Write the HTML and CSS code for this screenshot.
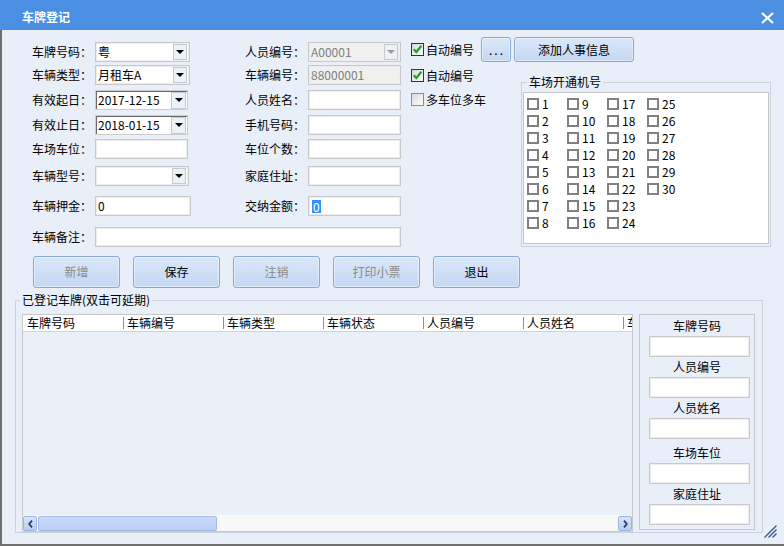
FILE: index.html
```html
<!DOCTYPE html>
<html lang="zh-CN">
<head>
<meta charset="utf-8">
<title>车牌登记</title>
<link rel="stylesheet" href="styles.css">
</head>
<body>
<div class="window">
  <div class="titlebar">
    <span class="title">车牌登记</span>
    <svg class="close" width="13" height="12" viewBox="0 0 13 12"><path d="M1 1L12 11M12 1L1 11" stroke="#fff" stroke-width="2.2" fill="none"/></svg>
  </div>
  <div class="client">
    <div class="top">
      <div class="form">
        <span class="lbl">车牌号码：</span>
        <div class="field combo w95"><span class="val">粤</span><span class="arrow"></span></div>
        <span class="lbl">人员编号：</span>
        <div class="field combo off w93"><span class="val">A00001</span><span class="arrow"></span></div>

        <span class="lbl">车辆类型：</span>
        <div class="field combo w95"><span class="val">月租车A</span><span class="arrow"></span></div>
        <span class="lbl">车辆编号：</span>
        <div class="field off w93"><span class="val">88000001</span></div>

        <span class="lbl">有效起日：</span>
        <div class="field date w93"><span class="val">2017-12-15</span><span class="arrow"></span></div>
        <span class="lbl">人员姓名：</span>
        <div class="field w93"></div>

        <span class="lbl">有效止日：</span>
        <div class="field date w93"><span class="val">2018-01-15</span><span class="arrow"></span></div>
        <span class="lbl">手机号码：</span>
        <div class="field w93"></div>

        <span class="lbl">车场车位：</span>
        <div class="field w93"></div>
        <span class="lbl">车位个数：</span>
        <div class="field w93"></div>

        <span class="lbl">车辆型号：</span>
        <div class="field combo w94"><span class="val"></span><span class="arrow"></span></div>
        <span class="lbl">家庭住址：</span>
        <div class="field w93"></div>

        <span class="lbl">车辆押金：</span>
        <div class="field w96"><span class="val">0</span></div>
        <span class="lbl">交纳金额：</span>
        <div class="field w93"><span class="val sel">0</span></div>

        <span class="lbl">车辆备注：</span>
        <div class="field wide"></div>
      </div>

      <div class="side">
        <div class="side-row">
          <label class="chk"><span class="box on"><svg width="11" height="11" viewBox="0 0 11 11"><path d="M1.8 5.2L4.3 8L9.4 1.8" stroke="#23a023" stroke-width="2.2" fill="none"/></svg></span>自动编号</label>
          <button class="btn dots">...</button>
          <button class="btn add">添加人事信息</button>
        </div>
        <div class="side-main">
          <div class="chk-col">
            <label class="chk"><span class="box on"><svg width="11" height="11" viewBox="0 0 11 11"><path d="M1.8 5.2L4.3 8L9.4 1.8" stroke="#23a023" stroke-width="2.2" fill="none"/></svg></span>自动编号</label>
            <label class="chk"><span class="box plain"></span>多车位多车</label>
          </div>
          <fieldset class="group ports">
            <legend>车场开通机号</legend>
            <div class="port-list">
              <div class="port"><span class="pbox"></span>1</div>
              <div class="port"><span class="pbox"></span>2</div>
              <div class="port"><span class="pbox"></span>3</div>
              <div class="port"><span class="pbox"></span>4</div>
              <div class="port"><span class="pbox"></span>5</div>
              <div class="port"><span class="pbox"></span>6</div>
              <div class="port"><span class="pbox"></span>7</div>
              <div class="port"><span class="pbox"></span>8</div>
              <div class="port"><span class="pbox"></span>9</div>
              <div class="port"><span class="pbox"></span>10</div>
              <div class="port"><span class="pbox"></span>11</div>
              <div class="port"><span class="pbox"></span>12</div>
              <div class="port"><span class="pbox"></span>13</div>
              <div class="port"><span class="pbox"></span>14</div>
              <div class="port"><span class="pbox"></span>15</div>
              <div class="port"><span class="pbox"></span>16</div>
              <div class="port"><span class="pbox"></span>17</div>
              <div class="port"><span class="pbox"></span>18</div>
              <div class="port"><span class="pbox"></span>19</div>
              <div class="port"><span class="pbox"></span>20</div>
              <div class="port"><span class="pbox"></span>21</div>
              <div class="port"><span class="pbox"></span>22</div>
              <div class="port"><span class="pbox"></span>23</div>
              <div class="port"><span class="pbox"></span>24</div>
              <div class="port"><span class="pbox"></span>25</div>
              <div class="port"><span class="pbox"></span>26</div>
              <div class="port"><span class="pbox"></span>27</div>
              <div class="port"><span class="pbox"></span>28</div>
              <div class="port"><span class="pbox"></span>29</div>
              <div class="port"><span class="pbox"></span>30</div>
            </div>
          </fieldset>
        </div>
      </div>
    </div>

    <div class="actions">
      <button class="btn act off">新增</button>
      <button class="btn act">保存</button>
      <button class="btn act off">注销</button>
      <button class="btn act off">打印小票</button>
      <button class="btn act">退出</button>
    </div>

    <fieldset class="group records">
      <legend>已登记车牌(双击可延期)</legend>
      <div class="rec-body">
        <div class="grid">
          <div class="grid-head">
            <span class="hc">车牌号码</span>
            <span class="hc sep">车辆编号</span>
            <span class="hc sep">车辆类型</span>
            <span class="hc sep">车辆状态</span>
            <span class="hc sep">人员编号</span>
            <span class="hc sep">人员姓名</span>
            <span class="hc sep">车场车位</span>
          </div>
          <div class="grid-body"></div>
          <div class="hscroll">
            <span class="sbtn"><svg width="5" height="8" viewBox="0 0 5 8"><path d="M4 0.6L1.2 4L4 7.4" stroke="#2d3d63" stroke-width="1.8" fill="none"/></svg></span>
            <span class="thumb"></span>
            <span class="track"></span>
            <span class="sbtn"><svg width="5" height="8" viewBox="0 0 5 8"><path d="M1 0.6L3.8 4L1 7.4" stroke="#2d3d63" stroke-width="1.8" fill="none"/></svg></span>
          </div>
        </div>
        <div class="panel">
          <div class="plabel">车牌号码</div>
          <div class="field pfield"></div>
          <div class="plabel">人员编号</div>
          <div class="field pfield"></div>
          <div class="plabel">人员姓名</div>
          <div class="field pfield"></div>
          <div class="plabel pgap">车场车位</div>
          <div class="field pfield"></div>
          <div class="plabel">家庭住址</div>
          <div class="field pfield"></div>
        </div>
      </div>
    </fieldset>
  </div>
  <svg class="grip" width="14" height="14" viewBox="0 0 14 14"><path d="M13.5 1.5L1.5 13.5M13.5 5.5L5.5 13.5M13.5 9.5L9.5 13.5" stroke="#3d5886" stroke-width="1.4" fill="none"/></svg>
</div>
</body>
</html>
```

FILE: styles.css
```css
* { box-sizing: border-box; }
html, body { margin: 0; padding: 0; }
body {
  width: 784px;
  height: 546px;
  overflow: hidden;
  font-family: "Noto Sans CJK SC", "Liberation Sans", sans-serif;
  font-size: 12px;
  color: #000;
  background: #e9eff8;
}
.window {
  width: 784px;
  height: 546px;
  display: flex;
  flex-direction: column;
  position: relative;
}
.titlebar {
  height: 30px;
  flex: none;
  background: #4a8fe1;
  display: flex;
  align-items: center;
  justify-content: space-between;
  padding: 0 10px 0 22px;
  color: #fff;
}
.title { font-weight: bold; line-height: 14px; margin-top: 4px; }
.close { margin-top: 6px; }

.client {
  flex: 1;
  border-left: 2px solid #6f6f6f;
  border-bottom: 2px solid #6f6f6f;
  background: #e9eff8;
  display: flex;
  flex-direction: column;
}

/* top area */
.top {
  display: flex;
  align-items: flex-start;
  padding-left: 30px;
  height: 221px;
  flex: none;
}
.form {
  margin-top: 10px;
  display: grid;
  grid-template-columns: 63px 150px 63px 92px;
  grid-template-rows: 24px 22px 28px 22px 26px 27px 34px 28px;
  align-items: center;
}
.lbl { line-height: 16px; white-space: nowrap; }

.field {
  height: 20px;
  background: #fff;
  border: 1px solid #c9c9c9;
  box-shadow: inset 0 0 0 1px #ededed;
  display: flex;
  align-items: center;
  padding-left: 2px;
  line-height: 16px;
  white-space: nowrap;
}
.w93 { width: 93px; }
.w94 { width: 94px; }
.w95 { width: 95px; }
.w96 { width: 96px; }
.wide { grid-column: 2 / 5; width: 306px; }
.field.off { background: #f0f0f0; color: #7f7f7f; }
.field.date { box-shadow: inset 1px 1px 0 #6a6a6a; border-color: #cdcdcd; }
.val.sel { background: #3392ff; color: #fff; line-height: 13px; padding: 0 1px; margin-left: 1px; }

.arrow {
  margin-left: auto;
  margin-right: 2px;
  width: 14px;
  height: 16px;
  background: #edf2f9;
  border: 1px solid #c4cad3;
  display: flex;
  align-items: center;
  justify-content: center;
}
.arrow::before {
  content: "";
  border-left: 4px solid transparent;
  border-right: 4px solid transparent;
  border-top: 4px solid #000;
}
.field.off .arrow::before { border-top-color: #9a9a9a; }
.field.date .arrow { height: 17px; width: 15px; margin-right: 1px; }

/* side area */
.side { margin-left: 11px; margin-top: 7px; width: 360px; }
.side-row { display: flex; align-items: center; height: 25px; }
.chk { display: flex; align-items: center; height: 13px; line-height: 13px; white-space: nowrap; }
.side-row .chk { width: 70px; }
.box {
  width: 13px;
  height: 13px;
  flex: none;
  margin-right: 2px;
  border: 1px solid #1c365f;
  background: linear-gradient(135deg, #d8d8d8, #ffffff);
  display: flex;
  align-items: center;
  justify-content: center;
}
.box.plain { border-color: #8c8c8c; }

.btn {
  font-family: inherit;
  font-size: 12px;
  color: #000;
  border: 1px solid #88a7d5;
  border-radius: 3px;
  background: linear-gradient(#dae7f9, #c3d8f3);
  box-shadow: inset 0 0 0 1px rgba(255, 255, 255, 0.45);
  padding: 0;
  line-height: 16px;
}
.dots { width: 30px; height: 25px; margin-right: 3px; letter-spacing: 2px; padding-left: 2px; }
.add { width: 120px; height: 25px; }

.side-main { display: flex; align-items: flex-start; }
.chk-col { width: 110px; padding-top: 7px; display: flex; flex-direction: column; gap: 11px; }

.group {
  margin: 0;
  border: 1px solid #cdd2da;
  min-width: 0;
}
.group legend { line-height: 16px; height: 16px; }

.ports { margin-top: 12px; width: 250px; padding: 2px 1px; }
.ports legend { margin-left: 4px; padding: 0 2px; }
.port-list {
  background: #fff;
  border: 1px solid #c6c6c6;
  height: 152px;
  padding: 4px 0 0 3px;
  display: grid;
  grid-template-rows: repeat(8, 17px);
  grid-auto-flow: column;
  grid-auto-columns: 40px;
}
.port { display: flex; align-items: center; height: 13px; line-height: 13px; }
.pbox { width: 12px; height: 12px; border: 2px solid #808080; background: #fff; margin-right: 3px; flex: none; }

/* action buttons */
.actions { display: flex; gap: 13px; margin: 5px 0 0 31px; flex: none; }
.act { width: 87px; height: 32px; }
.act.off { color: #8a8a8a; }

/* records */
.records { margin-top: 4px; margin-left: 13px; width: 748px; padding: 6px 7px 0 6px; flex: none; }
.records legend { margin-left: -2px; padding: 0 2px; }
.rec-body { display: flex; gap: 6px; align-items: flex-start; }
.grid {
  width: 611px;
  height: 218px;
  border: 1px solid #c9c9c9;
  background: #eaf0f8;
  display: flex;
  flex-direction: column;
}
.grid-head {
  height: 17px;
  flex: none;
  background: #fff;
  border-bottom: 1px solid #d2d2d2;
  display: flex;
  overflow: hidden;
}
.hc { width: 100px; flex: none; padding-left: 4px; line-height: 16px; white-space: nowrap; }
.hc.sep { background: linear-gradient(#8f8f8f, #8f8f8f) no-repeat 0 2px / 1px 12px; }
.grid-body { flex: 1; }
.hscroll { height: 16px; flex: none; display: flex; background: #f8f8f8; }
.sbtn {
  width: 14px;
  height: 15px;
  margin-top: 1px;
  background: linear-gradient(#d8e4fb, #b7cdf4);
  border: 1px solid #9db5e6;
  border-radius: 2px;
  display: flex;
  align-items: center;
  justify-content: center;
  flex: none;
}
.thumb {
  width: 179px;
  height: 15px;
  margin: 1px 0 0 1px;
  background: linear-gradient(#c9daf9, #bcd0f6);
  border: 1px solid #a3bbe9;
  border-radius: 2px;
  flex: none;
}
.track { flex: 1; }

.panel {
  width: 116px;
  height: 216px;
  border: 1px solid #c9c9c9;
  display: flex;
  flex-direction: column;
  padding-top: 1px;
}
.plabel { height: 20px; line-height: 20px; text-align: center; }
.pgap { margin-top: 4px; }
.pfield { width: 101px; height: 21px; margin-left: 9px; flex: none; }

.grip { position: absolute; right: 7px; bottom: 8px; }
```
